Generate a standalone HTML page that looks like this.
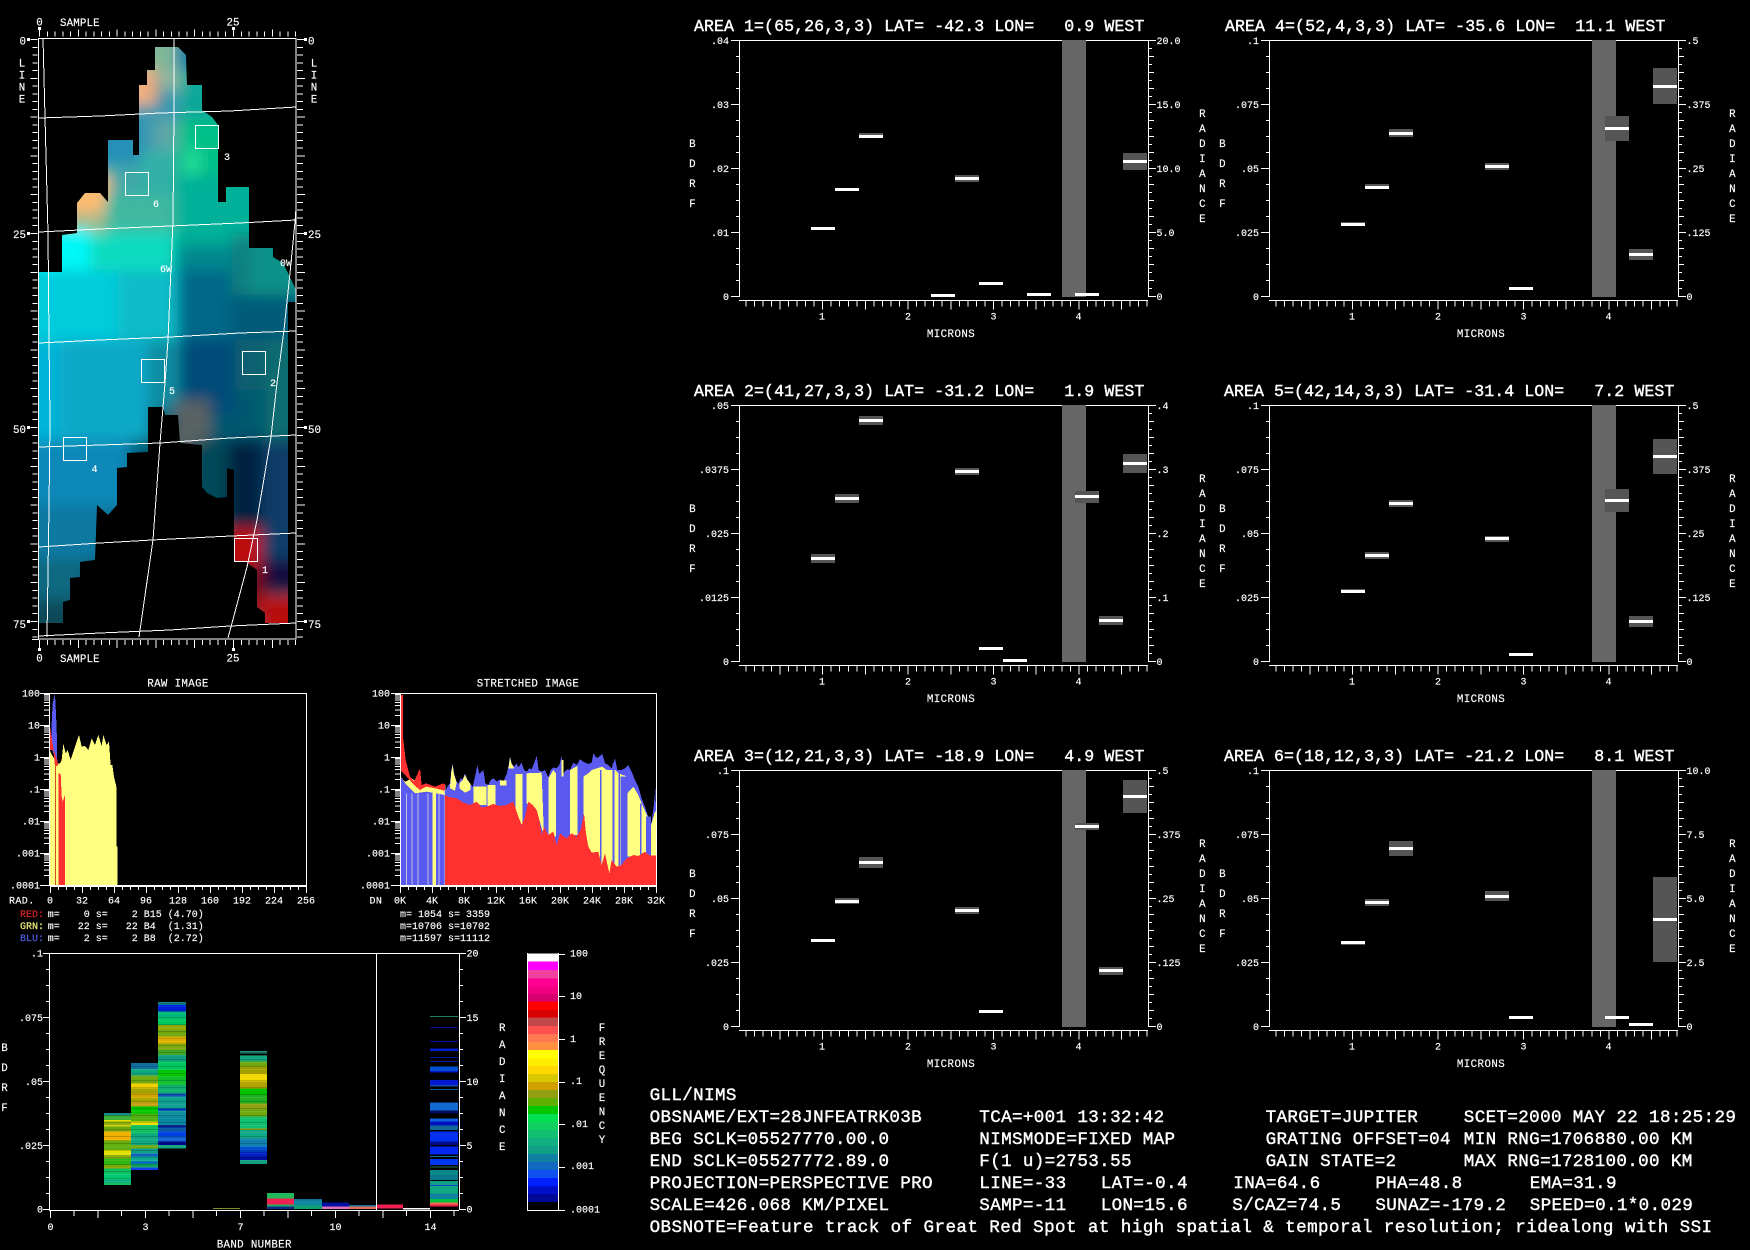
<!DOCTYPE html>
<html><head><meta charset="utf-8"><title>GLL/NIMS</title>
<style>
html,body{margin:0;padding:0;background:#000;overflow:hidden}
svg{display:block;shape-rendering:crispEdges}
text{font:10px "Liberation Mono",monospace;fill:#fff;stroke:#fff;stroke-width:.15px;white-space:pre}
.l{font-size:10.8px}
.t{font-size:16.6px;letter-spacing:.05px;stroke-width:.4px}
.b{font-size:17.6px;letter-spacing:.34px;stroke-width:.4px}
.n{letter-spacing:.4px}
.e{text-anchor:end}.m{text-anchor:middle}
.mc{letter-spacing:.4px}
line,polyline,path.s{stroke:#fff;fill:none;stroke-width:1}
.box{fill:none;stroke:#fff;stroke-width:1}
.w{fill:#fff}.g{fill:#555}.d{fill:#666}
.h27 rect{width:27px}.h28 rect{width:28px}
.cb rect{width:31px}
</style></head><body>
<svg xmlns="http://www.w3.org/2000/svg" width="1750" height="1250" viewBox="0 0 1750 1250">
<rect width="1750" height="1250" fill="#000"/>
<defs>
<filter id="bl" filterUnits="userSpaceOnUse" x="0" y="0" width="340" height="680"><feGaussianBlur stdDeviation="7"/></filter>
<pattern id="st" width="28" height="7" patternUnits="userSpaceOnUse"><rect y="2" width="28" height="1" fill="#000" opacity=".18"/><rect y="5" width="28" height="1" fill="#fff" opacity=".08"/></pattern>
<clipPath id="mk"><polygon points="155,47 178,47 186,55 187,85 202,85 202,110 212,117 218,125 218,202 226,202 226,187 249,187 249,248 273,248 273,257 283,263 288,273 296,290 296,302 288,302 288,623 265,623 265,613 257,607 257,570 246,562 234,562 234,470 227,468 227,497 217,498 207,493 202,487 202,445 180,443 178,415 165,415 163,407 148,407 148,452 127,453 127,467 117,468 117,505 108,515 97,505 95,560 80,562 80,577 70,578 70,600 63,602 63,623 39,623 39,272 62,272 62,235 77,233 77,203 85,193 100,193 108,202 108,140 133,140 133,155 139,155 139,85 147,85 147,70 155,70"/></clipPath>
<g id="ax">
<line x1="0" y1=".5" x2="410" y2=".5"/><line x1=".5" y1="0" x2=".5" y2="257"/><line x1="409.5" y1="0" x2="409.5" y2="257"/>
<path class="s" d="M-3 16.5H0M-3 32.5H0M-3 48.5H0M-8 64.5H0M-3 80.5H0M-3 96.5H0M-3 112.5H0M-8 128.5H0M-3 144.5H0M-3 160.5H0M-3 176.5H0M-8 192.5H0M-3 208.5H0M-3 224.5H0M-3 240.5H0M-8 256.5H0M-8 .5H0"/>
<path class="s" d="M410 8.5h3M410 16.5h5M410 24.5h3M410 32.5h5M410 40.5h3M410 48.5h5M410 56.5h3M410 64.5h7M410 72.5h3M410 80.5h5M410 88.5h3M410 96.5h5M410 104.5h3M410 112.5h5M410 120.5h3M410 128.5h7M410 136.5h3M410 144.5h5M410 152.5h3M410 160.5h5M410 168.5h3M410 176.5h5M410 184.5h3M410 192.5h7M410 200.5h3M410 208.5h5M410 216.5h3M410 224.5h5M410 232.5h3M410 240.5h5M410 248.5h3M410 256.5h7M410 .5h7"/>
<line x1="0" y1="260.5" x2="409" y2="260.5"/>
<line x1="6.3" y1="263.5" x2="408.5" y2="263.5" style="stroke-width:6" stroke-dasharray="1 7.54"/>
<line x1="40.5" y1="265" x2="408.5" y2="265" style="stroke-width:9" stroke-dasharray="1 41.7"/>
<rect class="d" x="323" y="0" width="24" height="257"/>
</g>
<path id="dec" class="s" d="M44 22.5h5M44 16.8h5M44 12.7h5M44 9.6h5M44 7.1h5M44 5h5M44 3.1h5M44 1.5h5"/>
</defs>

<!-- MAP -->
<g clip-path="url(#mk)"><g filter="url(#bl)">
<rect x="0" y="0" width="340" height="680" fill="#005870"/>
<rect x="135" y="20" width="45" height="50" fill="#80b898"/>
<rect x="176" y="30" width="30" height="56" fill="#1a80a8"/>
<rect x="120" y="68" width="36" height="40" fill="#f0b080"/>
<rect x="158" y="70" width="22" height="20" fill="#90b8a0"/>
<rect x="158" y="90" width="22" height="25" fill="#3c98b0"/>
<rect x="180" y="70" width="50" height="50" fill="#10a898"/>
<rect x="125" y="105" width="55" height="50" fill="#3a98b0"/>
<rect x="155" y="120" width="22" height="40" fill="#60a8a8"/>
<rect x="178" y="120" width="60" height="85" fill="#00c088"/>
<rect x="186" y="150" width="14" height="30" fill="#20e098"/>
<rect x="90" y="120" width="50" height="50" fill="#2890b8"/>
<rect x="95" y="165" width="50" height="30" fill="#40a8a8"/>
<rect x="140" y="150" width="38" height="50" fill="#30b0a8"/>
<rect x="55" y="175" width="55" height="38" fill="#ffbc70"/>
<rect x="60" y="212" width="50" height="20" fill="#a8b888"/>
<rect x="105" y="195" width="70" height="40" fill="#40b8a0"/>
<rect x="175" y="175" width="100" height="70" fill="#00b098"/>
<rect x="35" y="228" width="55" height="47" fill="#00f8f8"/>
<rect x="90" y="232" width="85" height="38" fill="#10dcc0"/>
<rect x="0" y="270" width="120" height="70" fill="#00ccdc"/>
<rect x="118" y="270" width="60" height="70" fill="#10bcc8"/>
<rect x="175" y="245" width="60" height="30" fill="#008890"/>
<rect x="178" y="270" width="55" height="70" fill="#006888"/>
<rect x="232" y="235" width="22" height="60" fill="#0a8080"/>
<rect x="250" y="235" width="90" height="65" fill="#109088"/>
<rect x="232" y="295" width="108" height="50" fill="#005a78"/>
<rect x="0" y="340" width="60" height="110" fill="#00b4d8"/>
<rect x="60" y="340" width="90" height="100" fill="#10a8c8"/>
<rect x="148" y="340" width="35" height="70" fill="#108ca0"/>
<rect x="180" y="340" width="55" height="75" fill="#004c78"/>
<rect x="235" y="340" width="30" height="50" fill="#0c6070"/>
<rect x="265" y="340" width="75" height="120" fill="#0a6c70"/>
<rect x="174" y="400" width="36" height="50" fill="#5a6262"/>
<rect x="0" y="440" width="130" height="70" fill="#1088b8"/>
<rect x="0" y="505" width="110" height="55" fill="#1078a0"/>
<rect x="0" y="560" width="85" height="45" fill="#0a6880"/>
<rect x="0" y="600" width="75" height="80" fill="#0a4858"/>
<rect x="195" y="440" width="40" height="70" fill="#004858"/>
<rect x="228" y="440" width="37" height="100" fill="#002040"/>
<rect x="262" y="440" width="78" height="125" fill="#0a3c68"/>
<rect x="222" y="528" width="40" height="44" fill="#bc1010"/>
<rect x="245" y="565" width="22" height="48" fill="#780c0c"/>
<rect x="264" y="560" width="50" height="32" fill="#180840"/>
<rect x="258" y="595" width="60" height="50" fill="#b80808"/>
</g></g>
<!-- map grid -->
<polyline points="39,118 100,116 160,113 230,111 296,107"/>
<polyline points="39,232 100,229 170,226 240,223 296,220"/>
<polyline points="39,343 100,340 170,337 240,333 296,331"/>
<polyline points="39,447 100,445 160,443 230,438 296,435"/>
<polyline points="39,547 100,543 152,540 210,537 296,533"/>
<polyline points="39,636 100,633 170,630 230,626 296,623"/>
<polyline points="43,38 45,117 48,233 49,340 50,420 49,507 47,637"/>
<polyline points="174,38 174,110 173,220 168,340 165,383 160,443 153,540 139,637"/>
<polyline points="296,208 295,222 290,273 284,330 277,383 271,437 257,520 247,567 228,638"/>
<rect class="box" x="38.5" y="38.5" width="257.5" height="600.5"/>
<rect class="box" x="195.5" y="125.5" width="23" height="23"/>
<rect class="box" x="125.5" y="172.5" width="23" height="23"/>
<rect class="box" x="141.5" y="359.5" width="23" height="23"/>
<rect class="box" x="242.5" y="351.5" width="23" height="23"/>
<rect class="box" x="63.5" y="437.5" width="23" height="23"/>
<rect class="box" x="234.5" y="538.5" width="23" height="23"/>
<g>
<text class="m" x="227" y="160">3</text><text class="m" x="156" y="207">6</text><text class="m" x="166" y="272">6W</text><text class="m" x="286" y="266">0W</text>
<text class="m" x="172" y="394">5</text><text class="m" x="273" y="386">2</text><text class="m" x="94.5" y="472">4</text><text class="m" x="265" y="573">1</text>
</g>
<!-- map ticks -->
<line x1="39" y1="34" x2="296" y2="34" style="stroke-width:5" stroke-dasharray="1 6.76"/>
<line x1="39" y1="33" x2="296" y2="33" style="stroke-width:7" stroke-dasharray="1 37.8"/>
<line x1="39" y1="642.5" x2="296" y2="642.5" style="stroke-width:5" stroke-dasharray="1 6.76"/>
<line x1="39" y1="644" x2="296" y2="644" style="stroke-width:8" stroke-dasharray="1 37.8"/>
<line x1="32" y1="639.5" x2="39" y2="639.5"/>
<line x1="35" y1="39" x2="35" y2="640" style="stroke-width:5" stroke-dasharray="1 6.76"/>
<line x1="34" y1="39" x2="34" y2="640" style="stroke-width:7" stroke-dasharray="1 37.8"/>
<line x1="300" y1="39" x2="300" y2="640" style="stroke-width:6" stroke-dasharray="1 6.76"/>
<line x1="301" y1="39" x2="301" y2="640" style="stroke-width:8" stroke-dasharray="1 37.8"/>
<path fill="#fff" d="M38 27h3v3h-3zM232 27h3v3h-3zM38 648h3v3h-3zM232 648h3v3h-3zM27 38h3v3h-3zM27 232h3v3h-3zM27 426h3v3h-3zM27 620h3v3h-3zM304 38h3v3h-3zM304 232h3v3h-3zM304 426h3v3h-3zM304 620h3v3h-3z"/>
<g class="l">
<text class="l m" x="39.5" y="25.5">0</text><text class="l" x="60" y="26" style="letter-spacing:.15px">SAMPLE</text><text class="l m" x="233" y="25.5">25</text>
<text class="l m" x="39.5" y="661.5">0</text><text class="l" x="60" y="662" style="letter-spacing:.15px">SAMPLE</text><text class="l m" x="233" y="661.5">25</text>
<text class="l e" x="26" y="44.5">0</text><text class="l e" x="26" y="238">25</text><text class="l e" x="26" y="433">50</text><text class="l e" x="26" y="628">75</text>
<text class="l" x="308" y="44.5">0</text><text class="l" x="308" y="238">25</text><text class="l" x="308" y="433">50</text><text class="l" x="308" y="628">75</text>
<text class="l m" x="22 22 22 22" y="66.5 78.5 90.5 102.5">LINE</text>
<text class="l m" x="314 314 314 314" y="66.5 78.5 90.5 102.5">LINE</text>
</g>

<!-- RAW HIST -->
<g transform="translate(0,670) scale(.33333)">
<polygon fill="#ffff80" points="148,647 148,240 170,280 180,280 185,270 190,222 197,250 203,240 212,270 222,240 237,195 245,230 255,228 265,240 275,205 285,225 295,195 305,228 310,195 320,225 327,215 332,285 337,285 342,320 349,350 349,530 353,530 353,647"/>
<polygon fill="#5a5af0" points="155,160 158,100 165,70 170,175 172,280 160,250 155,235"/>
<polygon fill="#ff3030" points="150,170 160,235 172,275 175,285 165,290 160,240 150,240"/>
<rect x="165" y="285" width="3" height="362" fill="#d05020"/>
<polygon fill="#ff3030" points="175,647 175,310 182,310 185,380 188,395 195,375 195,647"/>
</g>
<rect class="box" x="49.5" y="693.5" width="257" height="192"/>
<path class="s" d="M40 693.5h9M40 725.5h9M40 757.5h9M40 789.5h9M40 821.5h9M40 853.5h9M40 885.5h9"/>
<use href="#dec" y="693"/><use href="#dec" y="725"/><use href="#dec" y="757"/><use href="#dec" y="789"/><use href="#dec" y="821"/><use href="#dec" y="853"/>
<line x1="50" y1="886.5" x2="307" y2="886.5"/>
<line x1="50" y1="888.5" x2="307" y2="888.5" style="stroke-width:3" stroke-dasharray="1 7"/>
<line x1="50" y1="890" x2="307" y2="890" style="stroke-width:6" stroke-dasharray="1 31"/>
<text class="e" x="40" y="696.5">100</text><text class="e" x="40" y="728.5">10</text><text class="e" x="40" y="760.5">1</text><text class="e" x="40" y="792.5">.1</text><text class="e" x="40" y="824.5">.01</text><text class="e" x="40" y="856.5">.001</text><text class="e" x="40" y="888.5">.0001</text>
<text x="9" y="903.5" style="letter-spacing:.4px">RAD.</text>
<g><text class="m" x="50" y="903.5">0</text><text class="m" x="82" y="903.5">32</text><text class="m" x="114" y="903.5">64</text><text class="m" x="146" y="903.5">96</text><text class="m" x="178" y="903.5">128</text><text class="m" x="210" y="903.5">160</text><text class="m" x="242" y="903.5">192</text><text class="m" x="274" y="903.5">224</text><text class="m" x="306" y="903.5">256</text></g>
<text class="l m" x="178" y="686.5" style="letter-spacing:.35px">RAW IMAGE</text>
<text x="20" y="917" style="fill:#e02828;stroke:#e02828">RED:</text><text x="47.7" y="917">m=    0 s=    2 B15 (4.70)</text>
<text x="20" y="929" style="fill:#f8f880;stroke:#f8f880">GRN:</text><text x="47.7" y="929">m=   22 s=   22 B4  (1.31)</text>
<text x="20" y="941" style="fill:#5060e0;stroke:#5060e0">BLU:</text><text x="47.7" y="941">m=    2 s=    2 B8  (2.72)</text>

<!-- STRETCHED HIST -->
<g transform="translate(340,670) scale(.33333)">
<polygon fill="#ffff80" points="181,647 181,320 195,335 215,325 240,345 260,345 280,350 315,345 315,647"/>
<polygon fill="#5a5af0" points="181,647 181,320 200,345 225,370 260,365 315,375 315,647"/>
<path fill="#c0c0e0" d="M198 370h3v277h-3zM215 370h3v277h-3zM232 370h3v277h-3zM262 370h3v277h-3zM296 370h3v277h-3zM313 345h3v302h-3z"/>
<path fill="#ffff80" d="M278 360h10v287h-10z"/>
<polygon fill="#ff3030" points="181,75 189,75 189,200 197,270 210,320 222,335 240,295 245,345 258,340 285,350 310,340 315,345 315,362 285,355 258,350 240,360 222,345 200,320 181,300"/>
<polygon fill="#5a5af0" points="315,647 315,365 322,350 330,340 334,300 338,280 342,310 348,330 355,342 362,325 368,328 375,310 382,328 390,340 398,350 405,320 412,285 418,312 424,305 430,300 436,340 445,345 452,330 460,325 470,335 480,328 490,335 500,312 506,285 510,258 515,280 522,290 530,280 535,292 545,278 552,300 560,305 568,295 575,298 582,280 590,258 596,300 606,305 615,300 625,322 632,300 640,292 650,295 658,285 665,258 670,310 680,298 690,300 700,278 710,285 720,268 730,275 745,282 755,278 760,250 768,262 775,262 787,252 795,280 805,285 815,295 825,265 832,300 845,300 855,295 865,285 875,305 885,330 895,350 905,385 915,410 925,440 935,458 942,400 946,355 948,420 948,647"/>
<g fill="#ffff80">
<polygon points="330,350 334,305 338,285 342,312 350,338 345,362 330,355"/>
<polygon points="358,340 368,330 375,314 382,330 392,342 392,360 375,368 358,355"/>
<rect x="400" y="350" width="40" height="55"/>
<rect x="442" y="345" width="24" height="65"/>
<rect x="480" y="332" width="20" height="14"/>
<polygon points="506,290 510,262 515,282 522,292 522,296 506,296"/>
<polygon points="526,312 550,312 550,460 538,465 526,440"/>
<polygon points="560,310 605,308 612,500 590,420 560,400"/>
<polygon points="625,325 640,300 648,310 648,500 625,500"/>
<rect x="664" y="270" width="6" height="50"/>
<polygon points="690,300 712,288 712,495 690,495"/>
<polygon points="730,320 745,310 755,300 770,295 787,290 800,300 825,300 835,310 862,320 862,620 730,620"/>
<polygon points="862,370 880,350 895,375 905,400 925,445 925,560 862,560"/>
<polygon points="932,470 945,425 948,425 948,560 932,560"/>
</g>
<path fill="#5a5af0" d="M780 300h4v300h-4zM818 280h5v320h-5zM836 310h4v280h-4zM842 320h20v270h-20zM900 400h4v170h-4zM918 440h15v120h-15zM650 300h14v230h-14zM615 320h8v180h-8zM670 310h20v190h-20zM548 310h10v160h-10z"/>
<polygon fill="#ff3030" points="315,647 315,375 330,382 350,385 370,398 390,405 410,395 425,412 440,410 460,402 480,408 500,405 520,395 528,420 535,440 545,465 555,440 565,395 578,405 590,420 598,450 605,495 612,470 625,495 640,485 650,525 660,490 680,505 695,490 710,500 722,480 732,430 738,490 745,530 755,548 775,545 785,585 795,550 808,610 815,570 830,590 845,585 860,565 880,555 895,558 915,545 930,557 948,557 948,647"/>
</g>
<rect class="box" x="400.5" y="693.5" width="256" height="192"/>
<path class="s" d="M391 693.5h9M391 725.5h9M391 757.5h9M391 789.5h9M391 821.5h9M391 853.5h9M391 885.5h9"/>
<use href="#dec" x="351" y="693"/><use href="#dec" x="351" y="725"/><use href="#dec" x="351" y="757"/><use href="#dec" x="351" y="789"/><use href="#dec" x="351" y="821"/><use href="#dec" x="351" y="853"/>
<line x1="400" y1="886.5" x2="657" y2="886.5"/>
<line x1="400" y1="888.5" x2="657" y2="888.5" style="stroke-width:3" stroke-dasharray="1 7"/>
<line x1="400" y1="890" x2="657" y2="890" style="stroke-width:6" stroke-dasharray="1 31"/>
<text class="e" x="390" y="696.5">100</text><text class="e" x="390" y="728.5">10</text><text class="e" x="390" y="760.5">1</text><text class="e" x="390" y="792.5">.1</text><text class="e" x="390" y="824.5">.01</text><text class="e" x="390" y="856.5">.001</text><text class="e" x="390" y="888.5">.0001</text>
<text x="369.5" y="903.5" style="letter-spacing:.4px">DN</text>
<g><text class="m" x="400" y="903.5">0K</text><text class="m" x="432" y="903.5">4K</text><text class="m" x="464" y="903.5">8K</text><text class="m" x="496" y="903.5">12K</text><text class="m" x="528" y="903.5">16K</text><text class="m" x="560" y="903.5">20K</text><text class="m" x="592" y="903.5">24K</text><text class="m" x="624" y="903.5">28K</text><text class="m" x="656" y="903.5">32K</text></g>
<text class="l m" x="528" y="686.5" style="letter-spacing:.35px">STRETCHED IMAGE</text>
<text x="400" y="917">m= 1054 s= 3359</text><text x="400" y="929">m=10706 s=10702</text><text x="400" y="941">m=11597 s=11112</text>

<!-- BAND CHART -->
<g transform="translate(104,945) scale(1,.33333)" class="h27">
<rect y="504" height="8" fill="#1a8a80"/><rect y="512" height="13" fill="#38b030"/><rect y="525" height="5" fill="#e0e000"/><rect y="530" height="10" fill="#90b010"/><rect y="540" height="5" fill="#d0d000"/><rect y="545" height="15" fill="#70a810"/><rect y="560" height="25" fill="#f0b000"/><rect y="585" height="5" fill="#90a800"/><rect y="590" height="25" fill="#60b010"/><rect y="615" height="15" fill="#e0e000"/><rect y="630" height="10" fill="#90b010"/><rect y="640" height="20" fill="#30b810"/><rect y="660" height="10" fill="#80a800"/><rect y="670" height="15" fill="#10c060"/><rect y="685" height="20" fill="#00c870"/><rect y="705" height="7" fill="#10a880"/><rect y="712" height="8" fill="#10c060"/>
</g>
<g transform="translate(131,945) scale(1,.33333)" class="h27">
<rect y="354" height="18" fill="#1070a0"/><rect y="372" height="20" fill="#10a880"/><rect y="392" height="23" fill="#70a810"/><rect y="415" height="15" fill="#f0d000"/><rect y="430" height="15" fill="#a0a000"/><rect y="445" height="15" fill="#d0a800"/><rect y="460" height="10" fill="#a0a800"/><rect y="470" height="15" fill="#c0a010"/><rect y="485" height="20" fill="#00c800"/><rect y="505" height="25" fill="#50b010"/><rect y="530" height="10" fill="#f0e000"/><rect y="540" height="25" fill="#10c060"/><rect y="565" height="35" fill="#10a880"/><rect y="600" height="10" fill="#70a810"/><rect y="610" height="15" fill="#10a088"/><rect y="625" height="10" fill="#1060c0"/><rect y="635" height="15" fill="#10a890"/><rect y="650" height="5" fill="#0060d0"/><rect y="655" height="13" fill="#10a060"/><rect y="668" height="7" fill="#1040f0"/>
</g>
<g transform="translate(158,945) scale(1,.33333)" class="h28">
<rect y="171" height="5" fill="#208878"/><rect y="176" height="4" fill="#0878a0"/><rect y="180" height="20" fill="#0020e0"/><rect y="200" height="20" fill="#00b878"/><rect y="220" height="20" fill="#00c860"/><rect y="240" height="15" fill="#90a800"/><rect y="255" height="20" fill="#70a810"/><rect y="275" height="20" fill="#e0b000"/><rect y="295" height="20" fill="#80a810"/><rect y="315" height="15" fill="#40a820"/><rect y="330" height="20" fill="#10a080"/><rect y="350" height="25" fill="#00c860"/><rect y="375" height="20" fill="#00c800"/><rect y="395" height="25" fill="#10c030"/><rect y="420" height="25" fill="#10b070"/><rect y="445" height="10" fill="#1050c0"/><rect y="455" height="35" fill="#10a090"/><rect y="490" height="7" fill="#0030c0"/><rect y="497" height="18" fill="#1090a0"/><rect y="515" height="25" fill="#0888a0"/><rect y="540" height="8" fill="#001888"/><rect y="548" height="12" fill="#1060b0"/><rect y="560" height="15" fill="#0040e0"/><rect y="575" height="15" fill="#1060d0"/><rect y="590" height="10" fill="#000890"/><rect y="600" height="11" fill="#10a080"/>
</g>
<g transform="translate(240,945) scale(1,.33333)" class="h27">
<rect y="318" height="7" fill="#208878"/><rect y="332" height="18" fill="#10a880"/><rect y="350" height="15" fill="#70a810"/><rect y="365" height="20" fill="#a0a000"/><rect y="385" height="25" fill="#f0d800"/><rect y="410" height="20" fill="#b0a000"/><rect y="430" height="20" fill="#00c000"/><rect y="450" height="25" fill="#20b020"/><rect y="475" height="15" fill="#90a010"/><rect y="490" height="25" fill="#70a810"/><rect y="515" height="35" fill="#10c070"/><rect y="550" height="5" fill="#a0a010"/><rect y="555" height="25" fill="#10a888"/><rect y="580" height="25" fill="#1080b0"/><rect y="605" height="15" fill="#0050d0"/><rect y="620" height="15" fill="#0020c0"/><rect y="635" height="10" fill="#0010a0"/><rect y="645" height="12" fill="#10a080"/>
</g>
<rect x="104" y="1113" width="27" height="72" fill="url(#st)"/><rect x="131" y="1063" width="27" height="107" fill="url(#st)"/><rect x="158" y="1002" width="28" height="147" fill="url(#st)"/><rect x="240" y="1051" width="27" height="113" fill="url(#st)"/>
<g transform="translate(213,945) scale(1,.33333)" class="h27"><rect y="789" height="3" fill="#809030"/></g>
<g transform="translate(267,945) scale(1,.33333)" class="h27">
<rect y="744" height="16" fill="#20b858"/><rect y="760" height="18" fill="#f02050"/><rect y="778" height="7" fill="#20b060"/><rect y="785" height="7" fill="#0a2888"/>
</g>
<g transform="translate(294,945) scale(1,.33333)" class="h28">
<rect y="762" height="5" fill="#1070a0"/><rect y="767" height="15" fill="#1088a0"/><rect y="782" height="10" fill="#10a070"/>
</g>
<g transform="translate(322,945) scale(1,.33333)" class="h27">
<rect y="772" height="13" fill="#0010a0"/><rect y="785" height="7" fill="#e070c0"/>
</g>
<g transform="translate(349,945) scale(1,.33333)" class="h27">
<rect y="780" height="5" fill="#1070a0"/><rect y="785" height="7" fill="#e07050"/>
</g>
<g transform="translate(376,945) scale(1,.33333)" class="h27"><rect y="778" height="12" fill="#f02050"/></g>
<g transform="translate(403,945) scale(1,.33333)" class="h27"><rect y="789" height="4" fill="#fff"/></g>
<g transform="translate(430,945) scale(1,.33333)" class="h28">
<rect y="213" height="3" fill="#208060"/><rect y="246" height="3" fill="#0010a0"/><rect y="288" height="3" fill="#0010b0"/><rect y="311" height="7" fill="#0020d0"/><rect y="336" height="3" fill="#0018a0"/><rect y="348" height="3" fill="#0018a0"/><rect y="365" height="13" fill="#0050d0"/><rect y="378" height="5" fill="#0018d0"/><rect y="405" height="15" fill="#0018d0"/><rect y="420" height="4" fill="#1050b0"/><rect y="432" height="3" fill="#1060a0"/><rect y="472" height="25" fill="#1068d0"/><rect y="497" height="8" fill="#000c60"/><rect y="520" height="10" fill="#1060e0"/><rect y="530" height="12" fill="#0010c0"/><rect y="542" height="13" fill="#106898"/><rect y="560" height="30" fill="#0030f0"/><rect y="590" height="10" fill="#000c90"/><rect y="605" height="23" fill="#0028f0"/><rect y="633" height="3" fill="#1070a0"/><rect y="642" height="18" fill="#0038f0"/><rect y="665" height="3" fill="#207060"/><rect y="675" height="15" fill="#088888"/><rect y="690" height="15" fill="#0a7888"/><rect y="708" height="12" fill="#10a088"/><rect y="720" height="3" fill="#0040d0"/><rect y="723" height="22" fill="#10a880"/><rect y="745" height="17" fill="#1080a0"/><rect y="762" height="10" fill="#00c040"/><rect y="772" height="7" fill="#f07050"/><rect y="779" height="6" fill="#f02050"/>
</g>
<line x1="49" y1="953.5" x2="460" y2="953.5"/><line x1="49.5" y1="953" x2="49.5" y2="1210"/><line x1="459.5" y1="953" x2="459.5" y2="1210"/><line x1="376.5" y1="953" x2="376.5" y2="1210"/>
<line x1="49" y1="1210.5" x2="459" y2="1210.5"/>
<path class="s" d="M43 953.5h6M46 969.5h3M46 985.5h3M46 1001.5h3M43 1017.5h6M46 1033.5h3M46 1049.5h3M46 1065.5h3M43 1081.5h6M46 1097.5h3M46 1113.5h3M46 1129.5h3M43 1145.5h6M46 1161.5h3M46 1177.5h3M46 1193.5h3M43 1209.5h6"/>
<path class="s" d="M460 953.5h6M460 969.5h3M460 985.5h3M460 1001.5h3M460 1017.5h6M460 1033.5h3M460 1049.5h3M460 1065.5h3M460 1081.5h6M460 1097.5h3M460 1113.5h3M460 1129.5h3M460 1145.5h6M460 1161.5h3M460 1177.5h3M460 1193.5h3M460 1209.5h6"/>
<path class="s" d="M50.5 1211v7M74 1211v5M98 1211v7M121.5 1211v5M145.5 1211v7M169 1211v5M193 1211v7M216.5 1211v5M240.5 1211v7M264 1211v5M288 1211v7M311.5 1211v5M335.5 1211v7M359 1211v5M383 1211v7M406.5 1211v5M430.5 1211v7M454 1211v5"/>
<text class="e" x="43" y="956.5">.1</text><text class="e" x="43" y="1021">.075</text><text class="e" x="43" y="1085">.05</text><text class="e" x="43" y="1149">.025</text><text class="e" x="43" y="1212.5">0</text>
<text x="466.5" y="956.5">20</text><text x="466.5" y="1021">15</text><text x="466.5" y="1085">10</text><text x="466.5" y="1149">5</text><text x="466.5" y="1212.5">0</text>
<text class="l m" x="4.5 4.5 4.5 4.5" y="1051 1071 1091 1111">BDRF</text>
<text class="l m" x="502.3 502.3 502.3 502.3 502.3 502.3 502.3 502.3" y="1031 1048 1065 1082 1099 1116 1133 1150">RADIANCE</text>
<text class="l m" x="602 602 602 602 602 602 602 602 602" y="1031 1045 1059 1073 1087 1101 1115 1129 1143">FREQUENCY</text>
<text class="m" x="50.5" y="1230">0</text><text class="m" x="145.5" y="1230">3</text><text class="m" x="240.5" y="1230">7</text><text class="m" x="335.5" y="1230">10</text><text class="m" x="430.5" y="1230">14</text>
<text class="l" x="216.7" y="1247.5" style="letter-spacing:.35px">BAND NUMBER</text>

<!-- COLOUR BAR -->
<g transform="translate(527.5,945) scale(1,.33333)" class="cb">
<rect y="25" height="25" fill="#fff"/><rect y="50" height="25" fill="#f0f"/><rect y="75" height="25" fill="#f040a0"/><rect y="100" height="25" fill="#ff0090"/><rect y="125" height="22" fill="#f00080"/><rect y="147" height="23" fill="#d80070"/><rect y="170" height="25" fill="#f00"/><rect y="195" height="23" fill="#d80000"/><rect y="218" height="25" fill="#c04848"/><rect y="243" height="24" fill="#ff5050"/><rect y="267" height="24" fill="#ff7850"/><rect y="291" height="24" fill="#ff9040"/><rect y="315" height="25" fill="#ff0"/><rect y="340" height="23" fill="#ffee00"/><rect y="363" height="24" fill="#ffd800"/><rect y="387" height="24" fill="#d8c800"/><rect y="411" height="24" fill="#d0a000"/><rect y="435" height="24" fill="#90a010"/><rect y="459" height="24" fill="#60b000"/><rect y="483" height="24" fill="#00c800"/><rect y="507" height="24" fill="#00e050"/><rect y="531" height="24" fill="#10d060"/><rect y="555" height="24" fill="#10c070"/><rect y="579" height="24" fill="#10b080"/><rect y="603" height="24" fill="#10a088"/><rect y="627" height="24" fill="#1080a0"/><rect y="651" height="24" fill="#1068c0"/><rect y="675" height="24" fill="#1050f0"/><rect y="699" height="24" fill="#0020ff"/><rect y="723" height="24" fill="#0010c8"/><rect y="747" height="24" fill="#000898"/>
</g>
<path class="s" d="M527.5 953v257.5h31V953"/>
<path class="s" d="M558 954.5h7M558 996.5h7M558 1039.5h7M558 1082.5h7M558 1124.5h7M558 1167.5h7M558 1210.5h7"/>
<text x="570" y="956.5">100</text><text x="570" y="999">10</text><text x="570" y="1042">1</text><text x="570" y="1084">.1</text><text x="570" y="1127">.01</text><text x="570" y="1169">.001</text><text x="570" y="1212.5">.0001</text>

<!-- PANEL 1 -->
<g transform="translate(739,40)">
<text class="t" x="-45" y="-9">AREA 1=(65,26,3,3) LAT= -42.3 LON=   0.9 WEST</text>
<use href="#ax"/>
<rect class="w" x="72" y="187" width="24" height="3"/>
<rect class="w" x="96" y="148" width="24" height="3"/>
<rect class="g" x="120" y="93" width="24" height="5"/><rect class="w" x="120" y="95" width="24" height="3"/>
<rect class="w" x="192" y="254" width="24" height="3"/>
<rect class="g" x="216" y="135" width="24" height="7"/><rect class="w" x="216" y="137" width="24" height="3"/>
<rect class="w" x="240" y="242" width="24" height="3"/>
<rect class="w" x="288" y="253" width="24" height="3"/>
<rect class="w" x="336" y="253" width="24" height="3"/>
<rect class="g" x="384" y="113" width="24" height="17"/><rect class="w" x="384" y="120" width="24" height="3"/>
<text class="e" x="-10" y="4">.04</text><text class="e" x="-10" y="68">.03</text><text class="e" x="-10" y="132">.02</text><text class="e" x="-10" y="196">.01</text><text class="e" x="-10" y="260">0</text>
<text x="417.5" y="4">20.0</text><text x="417.5" y="68">15.0</text><text x="417.5" y="132">10.0</text><text x="417.5" y="196">5.0</text><text x="417.5" y="260">0</text>
<text class="l m" x="-46.6 -46.6 -46.6 -46.6" y="107 127 147 167">BDRF</text>
<text class="l m" x="463.4 463.4 463.4 463.4 463.4 463.4 463.4 463.4" y="77 92 107 122 137 152 167 182">RADIANCE</text>
<text class="m" x="83" y="279.5">1</text><text class="m" x="169" y="279.5">2</text><text class="m" x="254.5" y="279.5">3</text><text class="m" x="339.5" y="279.5">4</text>
<text class="l m mc" x="212" y="297">MICRONS</text>
</g>

<!-- PANEL 4 -->
<g transform="translate(1269,40)">
<text class="t" x="-44" y="-9">AREA 4=(52,4,3,3) LAT= -35.6 LON=  11.1 WEST</text>
<use href="#ax"/>
<rect class="g" x="72" y="182" width="24" height="4"/><rect class="w" x="72" y="183" width="24" height="3"/>
<rect class="g" x="96" y="144" width="24" height="5"/><rect class="w" x="96" y="146" width="24" height="3"/>
<rect class="g" x="120" y="89" width="24" height="8"/><rect class="w" x="120" y="92" width="24" height="3"/>
<rect class="g" x="216" y="123" width="24" height="7"/><rect class="w" x="216" y="125" width="24" height="3"/>
<rect class="w" x="240" y="247" width="24" height="3"/>
<rect class="g" x="336" y="76" width="24" height="25"/><rect class="w" x="336" y="87" width="24" height="3"/>
<rect class="g" x="360" y="209" width="24" height="11"/><rect class="w" x="360" y="213" width="24" height="3"/>
<rect class="g" x="384" y="28" width="24" height="36"/><rect class="w" x="384" y="45" width="24" height="3"/>
<text class="e" x="-10" y="4">.1</text><text class="e" x="-10" y="68">.075</text><text class="e" x="-10" y="132">.05</text><text class="e" x="-10" y="196">.025</text><text class="e" x="-10" y="260">0</text>
<text x="417.5" y="4">.5</text><text x="417.5" y="68">.375</text><text x="417.5" y="132">.25</text><text x="417.5" y="196">.125</text><text x="417.5" y="260">0</text>
<text class="l m" x="-46.6 -46.6 -46.6 -46.6" y="107 127 147 167">BDRF</text>
<text class="l m" x="463.4 463.4 463.4 463.4 463.4 463.4 463.4 463.4" y="77 92 107 122 137 152 167 182">RADIANCE</text>
<text class="m" x="83" y="279.5">1</text><text class="m" x="169" y="279.5">2</text><text class="m" x="254.5" y="279.5">3</text><text class="m" x="339.5" y="279.5">4</text>
<text class="l m mc" x="212" y="297">MICRONS</text>
</g>

<!-- PANEL 2 -->
<g transform="translate(739,405)">
<text class="t" x="-45" y="-9">AREA 2=(41,27,3,3) LAT= -31.2 LON=   1.9 WEST</text>
<use href="#ax"/>
<rect class="g" x="72" y="149" width="24" height="9"/><rect class="w" x="72" y="152" width="24" height="3"/>
<rect class="g" x="96" y="89" width="24" height="9"/><rect class="w" x="96" y="92" width="24" height="3"/>
<rect class="g" x="120" y="11" width="24" height="9"/><rect class="w" x="120" y="14" width="24" height="3"/>
<rect class="g" x="216" y="63" width="24" height="7"/><rect class="w" x="216" y="65" width="24" height="3"/>
<rect class="w" x="240" y="242" width="24" height="3"/>
<rect class="w" x="264" y="254" width="24" height="3"/>
<rect class="g" x="336" y="86" width="24" height="12"/><rect class="w" x="336" y="90" width="24" height="3"/>
<rect class="g" x="360" y="211" width="24" height="9"/><rect class="w" x="360" y="214" width="24" height="3"/>
<rect class="g" x="384" y="49" width="24" height="19"/><rect class="w" x="384" y="57" width="24" height="3"/>
<text class="e" x="-10" y="4">.05</text><text class="e" x="-10" y="68">.0375</text><text class="e" x="-10" y="132">.025</text><text class="e" x="-10" y="196">.0125</text><text class="e" x="-10" y="260">0</text>
<text x="417.5" y="4">.4</text><text x="417.5" y="68">.3</text><text x="417.5" y="132">.2</text><text x="417.5" y="196">.1</text><text x="417.5" y="260">0</text>
<text class="l m" x="-46.6 -46.6 -46.6 -46.6" y="107 127 147 167">BDRF</text>
<text class="l m" x="463.4 463.4 463.4 463.4 463.4 463.4 463.4 463.4" y="77 92 107 122 137 152 167 182">RADIANCE</text>
<text class="m" x="83" y="279.5">1</text><text class="m" x="169" y="279.5">2</text><text class="m" x="254.5" y="279.5">3</text><text class="m" x="339.5" y="279.5">4</text>
<text class="l m mc" x="212" y="297">MICRONS</text>
</g>

<!-- PANEL 5 -->
<g transform="translate(1269,405)">
<text class="t" x="-45" y="-9">AREA 5=(42,14,3,3) LAT= -31.4 LON=   7.2 WEST</text>
<use href="#ax"/>
<rect class="g" x="72" y="184" width="24" height="4"/><rect class="w" x="72" y="185" width="24" height="3"/>
<rect class="g" x="96" y="147" width="24" height="7"/><rect class="w" x="96" y="149" width="24" height="3"/>
<rect class="g" x="120" y="95" width="24" height="7"/><rect class="w" x="120" y="97" width="24" height="3"/>
<rect class="g" x="216" y="131" width="24" height="6"/><rect class="w" x="216" y="132" width="24" height="3"/>
<rect class="w" x="240" y="248" width="24" height="3"/>
<rect class="g" x="336" y="84" width="24" height="23"/><rect class="w" x="336" y="94" width="24" height="3"/>
<rect class="g" x="360" y="211" width="24" height="11"/><rect class="w" x="360" y="215" width="24" height="3"/>
<rect class="g" x="384" y="34" width="24" height="35"/><rect class="w" x="384" y="50" width="24" height="3"/>
<text class="e" x="-10" y="4">.1</text><text class="e" x="-10" y="68">.075</text><text class="e" x="-10" y="132">.05</text><text class="e" x="-10" y="196">.025</text><text class="e" x="-10" y="260">0</text>
<text x="417.5" y="4">.5</text><text x="417.5" y="68">.375</text><text x="417.5" y="132">.25</text><text x="417.5" y="196">.125</text><text x="417.5" y="260">0</text>
<text class="l m" x="-46.6 -46.6 -46.6 -46.6" y="107 127 147 167">BDRF</text>
<text class="l m" x="463.4 463.4 463.4 463.4 463.4 463.4 463.4 463.4" y="77 92 107 122 137 152 167 182">RADIANCE</text>
<text class="m" x="83" y="279.5">1</text><text class="m" x="169" y="279.5">2</text><text class="m" x="254.5" y="279.5">3</text><text class="m" x="339.5" y="279.5">4</text>
<text class="l m mc" x="212" y="297">MICRONS</text>
</g>

<!-- PANEL 3 -->
<g transform="translate(739,770)">
<text class="t" x="-45" y="-9">AREA 3=(12,21,3,3) LAT= -18.9 LON=   4.9 WEST</text>
<use href="#ax"/>
<rect class="w" x="72" y="169" width="24" height="3"/>
<rect class="g" x="96" y="128" width="24" height="6"/><rect class="w" x="96" y="130" width="24" height="3"/>
<rect class="g" x="120" y="87" width="24" height="11"/><rect class="w" x="120" y="91" width="24" height="3"/>
<rect class="g" x="216" y="137" width="24" height="7"/><rect class="w" x="216" y="139" width="24" height="3"/>
<rect class="w" x="240" y="240" width="24" height="3"/>
<rect class="g" x="336" y="53" width="24" height="7"/><rect class="w" x="336" y="55" width="24" height="3"/>
<rect class="g" x="360" y="197" width="24" height="8"/><rect class="w" x="360" y="199" width="24" height="3"/>
<rect class="g" x="384" y="10" width="24" height="33"/><rect class="w" x="384" y="25" width="24" height="3"/>
<text class="e" x="-10" y="4">.1</text><text class="e" x="-10" y="68">.075</text><text class="e" x="-10" y="132">.05</text><text class="e" x="-10" y="196">.025</text><text class="e" x="-10" y="260">0</text>
<text x="417.5" y="4">.5</text><text x="417.5" y="68">.375</text><text x="417.5" y="132">.25</text><text x="417.5" y="196">.125</text><text x="417.5" y="260">0</text>
<text class="l m" x="-46.6 -46.6 -46.6 -46.6" y="107 127 147 167">BDRF</text>
<text class="l m" x="463.4 463.4 463.4 463.4 463.4 463.4 463.4 463.4" y="77 92 107 122 137 152 167 182">RADIANCE</text>
<text class="m" x="83" y="279.5">1</text><text class="m" x="169" y="279.5">2</text><text class="m" x="254.5" y="279.5">3</text><text class="m" x="339.5" y="279.5">4</text>
<text class="l m mc" x="212" y="297">MICRONS</text>
</g>

<!-- PANEL 6 -->
<g transform="translate(1269,770)">
<text class="t" x="-45" y="-9">AREA 6=(18,12,3,3) LAT= -21.2 LON=   8.1 WEST</text>
<use href="#ax"/>
<rect class="g" x="72" y="171" width="24" height="4"/><rect class="w" x="72" y="171" width="24" height="3"/>
<rect class="g" x="96" y="129" width="24" height="7"/><rect class="w" x="96" y="131" width="24" height="3"/>
<rect class="g" x="120" y="71" width="24" height="15"/><rect class="w" x="120" y="77" width="24" height="3"/>
<rect class="g" x="216" y="121" width="24" height="10"/><rect class="w" x="216" y="125" width="24" height="3"/>
<rect class="w" x="240" y="246" width="24" height="3"/>
<rect class="w" x="336" y="246" width="24" height="3"/>
<rect class="w" x="360" y="253" width="24" height="3"/>
<rect class="g" x="384" y="107" width="24" height="85"/><rect class="w" x="384" y="148" width="24" height="3"/>
<text class="e" x="-10" y="4">.1</text><text class="e" x="-10" y="68">.075</text><text class="e" x="-10" y="132">.05</text><text class="e" x="-10" y="196">.025</text><text class="e" x="-10" y="260">0</text>
<text x="417.5" y="4">10.0</text><text x="417.5" y="68">7.5</text><text x="417.5" y="132">5.0</text><text x="417.5" y="196">2.5</text><text x="417.5" y="260">0</text>
<text class="l m" x="-46.6 -46.6 -46.6 -46.6" y="107 127 147 167">BDRF</text>
<text class="l m" x="463.4 463.4 463.4 463.4 463.4 463.4 463.4 463.4" y="77 92 107 122 137 152 167 182">RADIANCE</text>
<text class="m" x="83" y="279.5">1</text><text class="m" x="169" y="279.5">2</text><text class="m" x="254.5" y="279.5">3</text><text class="m" x="339.5" y="279.5">4</text>
<text class="l m mc" x="212" y="297">MICRONS</text>
</g>

<!-- BOTTOM TEXT -->
<text class="b" x="649.6" y="1100">GLL/NIMS</text>
<text class="b" x="649.6" y="1122">OBSNAME/EXT=28JNFEATRK03B</text><text class="b" x="979.3" y="1122">TCA=+001 13:32:42</text><text class="b" x="1265.6" y="1122">TARGET=JUPITER</text><text class="b" x="1463.8" y="1122">SCET=2000 MAY 22 18:25:29</text>
<text class="b" x="649.6" y="1144">BEG SCLK=05527770.00.0</text><text class="b" x="979.3" y="1144">NIMSMODE=FIXED MAP</text><text class="b" x="1265.6" y="1144">GRATING OFFSET=04</text><text class="b" x="1463.8" y="1144">MIN RNG=1706880.00 KM</text>
<text class="b" x="649.6" y="1166">END SCLK=05527772.89.0</text><text class="b" x="979.3" y="1166">F(1 u)=2753.55</text><text class="b" x="1265.6" y="1166">GAIN STATE=2</text><text class="b" x="1463.8" y="1166">MAX RNG=1728100.00 KM</text>
<text class="b" x="649.6" y="1188">PROJECTION=PERSPECTIVE PRO</text><text class="b" x="979.3" y="1188">LINE=-33</text><text class="b" x="1100.7" y="1188">LAT=-0.4</text><text class="b" x="1233.3" y="1188">INA=64.6</text><text class="b" x="1375.4" y="1188">PHA=48.8</text><text class="b" x="1529.7" y="1188">EMA=31.9</text>
<text class="b" x="649.6" y="1210">SCALE=426.068 KM/PIXEL</text><text class="b" x="979.3" y="1210">SAMP=-11</text><text class="b" x="1100.7" y="1210">LON=15.6</text><text class="b" x="1232.3" y="1210">S/CAZ=74.5</text><text class="b" x="1375.4" y="1210">SUNAZ=-179.2</text><text class="b" x="1529.7" y="1210">SPEED=0.1*0.029</text>
<text class="b" x="649.6" y="1232" style="letter-spacing:.4px">OBSNOTE=Feature track of Great Red Spot at high spatial &amp; temporal resolution; ridealong with SSI</text>
</svg>
</body></html>
